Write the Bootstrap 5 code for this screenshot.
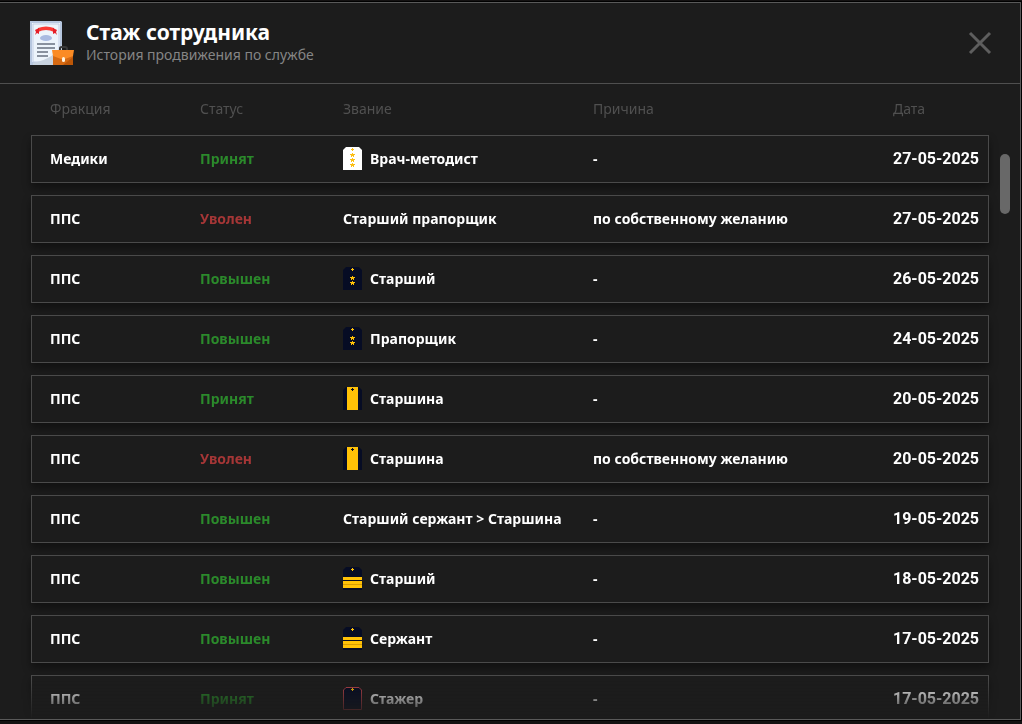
<!DOCTYPE html>
<html lang="ru">
<head>
<meta charset="utf-8">
<meta name="viewport" content="width=device-width, initial-scale=1">
<title>Стаж сотрудника</title>
<link href="https://cdn.jsdelivr.net/npm/bootstrap@5.3.0/dist/css/bootstrap.min.css" rel="stylesheet">
<style>
  body { background: #131111; color: #fff; font-family: "Noto Sans", sans-serif; font-size: 14px; line-height: 20px; }
  .panel { background: #1c1c1c; border: 1px solid #595959; border-left: 0; margin: 2px 1px 4px 0; box-shadow: 0 0 0 1px #000; }
  .panel-head { border-bottom: 1px solid #4f4f4f; height: 81px; padding: 0 28px 0 28px; margin-right: -1px; }
  .panel-text { padding-bottom: 2px; }
  .panel-title { font-size: 21px; line-height: 26px; }
  .panel-sub { color: #858585; }
  .close-x { width: 26px; height: 26px; color: #5e5e5e; }
  .history-scroll { padding: 0 31px; -webkit-mask-image: linear-gradient(#000 calc(100% - 40px), transparent); mask-image: linear-gradient(#000 calc(100% - 40px), transparent); }
  .history { width: 100%; table-layout: fixed; border-collapse: separate; border-spacing: 0 12px; }
  .history th, .history td { padding: 0; white-space: nowrap; }
  .history thead tr { height: 27px; }
  .history thead th { color: #505050; font-weight: 400; padding-bottom: 2px; }
  .history tbody tr { height: 48px; box-shadow: 0 5px 8px rgba(0, 0, 0, .4); }
  .history td { background: #1c1c1c; border: solid #4a4a4a; border-width: 1px 0; font-weight: 700; }
  .history td:first-child { border-left-width: 1px; padding-left: 18px; }
  .history th:first-child { padding-left: 19px; }
  .history td:last-child { border-right-width: 1px; font-family: Roboto, sans-serif; font-size: 16px; }
  .c-faction { width: 169px; }
  .c-status { width: 143px; }
  .c-rank { width: 250px; }
  .c-date { width: 96px; }
  .good { color: #2b8a2b; }
  .bad { color: #a53636; }
  .rank { gap: 8px; }
  .rank svg { width: 19px; height: 24px; flex: none; }
  .thumb { width: 10px; height: 60px; top: 151px; right: 10px; background: #686868; }
</style>
<script src="https://cdn.jsdelivr.net/npm/bootstrap@5.3.0/dist/js/bootstrap.bundle.min.js" defer></script>
</head>
<body class="vh-100 d-flex flex-column overflow-hidden">

<svg class="d-none" aria-hidden="true">
  <symbol id="base" viewBox="0 0 19 24"><path d="M0 23V3L3 0H16L19 3V23Z" fill="#060c24"/></symbol>
  <symbol id="pin" viewBox="0 0 3 3"><path d="M1 0H2V1H3V2H2V3H1V2H0V1H1Z"/></symbol>
  <symbol id="star" viewBox="0 0 5 4"><path d="M2 0H3V1H5V2H4V4H3V3H2V4H1V2H0V1H2Z"/></symbol>
  <symbol id="medic" viewBox="0 0 19 24">
    <path d="M0 23V3L3 0H16L19 3V23Z" fill="#fff"/>
    <g fill="#fcbf14"><use href="#pin" x="8" y="1" width="3" height="3"/><use href="#star" x="7" y="6" width="5" height="4"/><use href="#star" x="7" y="11" width="5" height="4"/><use href="#star" x="7" y="16" width="5" height="4"/></g>
  </symbol>
  <symbol id="warrant" viewBox="0 0 19 24">
    <use href="#base" width="19" height="24"/>
    <g fill="#ffc107"><use href="#pin" x="8" y="1" width="3" height="3"/><use href="#star" x="7" y="9" width="5" height="4"/><use href="#star" x="7" y="14" width="5" height="4"/></g>
  </symbol>
  <symbol id="major" viewBox="0 0 19 24">
    <use href="#base" width="19" height="24"/>
    <path d="M4 0H15V23H4Z" fill="#ffc107"/><use href="#pin" x="8" y="1" width="3" height="3" fill="#060c24"/>
  </symbol>
  <symbol id="sergeant" viewBox="0 0 19 24">
    <use href="#base" width="19" height="24"/>
    <path d="M0 10H19V13H0ZM0 14H19V17H0ZM0 18H19V21H0Z" fill="#ffc107"/><path d="M0 17H19V18H0Z" fill="#d79d05"/>
    <use href="#pin" x="8" y="1" width="3" height="3" fill="#ffc107"/>
  </symbol>
  <symbol id="trainee" viewBox="0 0 19 24">
    <path d="M.5 22.500V3L3 .5H16L18.500 3V22.500Z" fill="#060c24" stroke="#b64249"/>
    <use href="#pin" x="8" y="1" width="3" height="3" fill="#ffc107"/>
  </symbol>
</svg>

<main class="panel flex-grow-1 d-flex flex-column position-relative overflow-hidden">
  <header class="panel-head d-flex align-items-center flex-shrink-0">
    <svg width="46" height="46" viewBox="0 0 46 46" aria-hidden="true">
      <path d="M2 1H33L34 2V45H2Z" fill="#b7c7df"/>
      <path d="M4 3H32V30Q24 37 14 42H4Z" fill="#edf4fb"/>
      <path d="M5 4H31V42H5Z" fill="none" stroke="#c3cfe6"/>
      <path d="M34 24Q28 38 5 43V45H34Z" fill="#c8d3df"/>
      <path d="M10 8Q18 5 26 8V12Q18 8 10 12Z" fill="#fb3a35"/>
      <path d="M7 10L11 8V14L9 13L7 15L8 12ZM29 10L25 8V14L27 13L29 15L28 12Z" fill="#e51e27"/>
      <ellipse cx="18" cy="18" rx="6" ry="3" fill="#a9bae1"/>
      <path d="M9 24H27M9 28H27M9 32H20M9 36H20" stroke="#687080" stroke-width="1.400"/>
      <path d="M32 30V28Q32 27 34 27H37Q39 27 39 29V30" fill="none" stroke="#383839" stroke-width="2"/>
      <path d="M25 35H45V45H25Z" fill="#d66a13"/><path d="M35 45L45 37V45Z" fill="#bd5707"/>
      <path d="M24 30H46L45 36L37 39H33L25 36Z" fill="#fb8b24"/>
      <rect x="34" y="37" width="3" height="5" rx="1.500" fill="#fff4df"/>
    </svg>
    <div class="panel-text ms-2 ps-1 flex-grow-1">
      <h1 class="panel-title fw-bold m-0">Стаж сотрудника</h1>
      <p class="panel-sub m-0">История продвижения по службе</p>
    </div>
    <button type="button" class="btn close-x p-0 border-0 d-flex" aria-label="Закрыть">
      <svg width="26" height="26" viewBox="0 0 26 26" fill="none" stroke="currentColor" stroke-width="3"><path d="M3 3L23 23M23 3L3 23"/></svg>
    </button>
  </header>

  <div class="history-scroll flex-grow-1 overflow-hidden">
    <table class="history">
      <colgroup><col class="c-faction"><col class="c-status"><col class="c-rank"><col><col class="c-date"></colgroup>
      <thead><tr><th scope="col">Фракция</th><th scope="col">Статус</th><th scope="col">Звание</th><th scope="col">Причина</th><th scope="col">Дата</th></tr></thead>
      <tbody>
        <tr><td>Медики</td><td class="good">Принят</td><td><div class="rank d-flex align-items-center"><svg><use href="#medic"/></svg>Врач-методист</div></td><td>-</td><td>27-05-2025</td></tr>
        <tr><td>ППС</td><td class="bad">Уволен</td><td>Старший прапорщик</td><td>по собственному желанию</td><td>27-05-2025</td></tr>
        <tr><td>ППС</td><td class="good">Повышен</td><td><div class="rank d-flex align-items-center"><svg><use href="#warrant"/></svg>Старший</div></td><td>-</td><td>26-05-2025</td></tr>
        <tr><td>ППС</td><td class="good">Повышен</td><td><div class="rank d-flex align-items-center"><svg><use href="#warrant"/></svg>Прапорщик</div></td><td>-</td><td>24-05-2025</td></tr>
        <tr><td>ППС</td><td class="good">Принят</td><td><div class="rank d-flex align-items-center"><svg><use href="#major"/></svg>Старшина</div></td><td>-</td><td>20-05-2025</td></tr>
        <tr><td>ППС</td><td class="bad">Уволен</td><td><div class="rank d-flex align-items-center"><svg><use href="#major"/></svg>Старшина</div></td><td>по собственному желанию</td><td>20-05-2025</td></tr>
        <tr><td>ППС</td><td class="good">Повышен</td><td>Старший сержант &gt; Старшина</td><td>-</td><td>19-05-2025</td></tr>
        <tr><td>ППС</td><td class="good">Повышен</td><td><div class="rank d-flex align-items-center"><svg><use href="#sergeant"/></svg>Старший</div></td><td>-</td><td>18-05-2025</td></tr>
        <tr><td>ППС</td><td class="good">Повышен</td><td><div class="rank d-flex align-items-center"><svg><use href="#sergeant"/></svg>Сержант</div></td><td>-</td><td>17-05-2025</td></tr>
        <tr><td>ППС</td><td class="good">Принят</td><td><div class="rank d-flex align-items-center"><svg><use href="#trainee"/></svg>Стажер</div></td><td>-</td><td>17-05-2025</td></tr>
      </tbody>
    </table>
  </div>
  <div class="thumb position-absolute rounded-pill"></div>
</main>
</body>
</html>
